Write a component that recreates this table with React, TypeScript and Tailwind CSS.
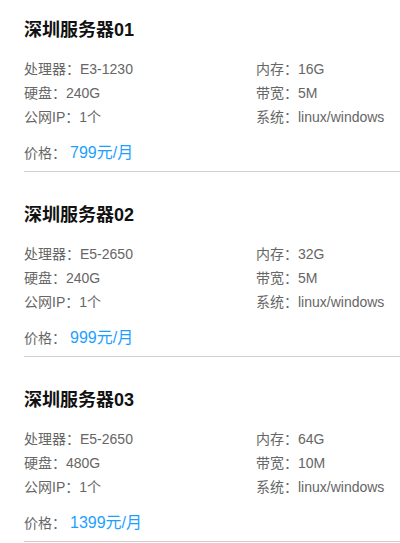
const servers = [
  { name: "深圳服务器01", cpu: "E3-1230", mem: "16G", disk: "240G", bw: "5M", ip: "1个", os: "linux/windows", price: "799元/月" },
  { name: "深圳服务器02", cpu: "E5-2650", mem: "32G", disk: "240G", bw: "5M", ip: "1个", os: "linux/windows", price: "999元/月" },
  { name: "深圳服务器03", cpu: "E5-2650", mem: "64G", disk: "480G", bw: "10M", ip: "1个", os: "linux/windows", price: "1399元/月" },
];

export default function App() {
  return (
    <div className="w-[400px] bg-white font-['Liberation_Sans','Noto_Sans_CJK_SC',sans-serif]">
      {servers.map((s) => (
        <div key={s.name} className="ml-6 border-b border-[#d0d0d0] pt-[31px] pb-[6px] first:pt-[18px]">
          <h3 className="text-[18px] leading-6 font-bold text-[#111]">{s.name}</h3>
          <div className="mt-[15px] grid grid-cols-[232px_1fr] text-[14px] leading-6 text-[#666]">
            <div>处理器：{s.cpu}</div>
            <div>内存：{s.mem}</div>
            <div>硬盘：{s.disk}</div>
            <div>带宽：{s.bw}</div>
            <div>公网IP：{s.ip}</div>
            <div>系统：{s.os}</div>
          </div>
          <div className="mt-3 flex items-center leading-6">
            <span className="text-[14px] text-[#666]">价格：</span>
            <span className="ml-1 text-[16px] text-[#1e9fff]">{s.price}</span>
          </div>
        </div>
      ))}
    </div>
  );
}
